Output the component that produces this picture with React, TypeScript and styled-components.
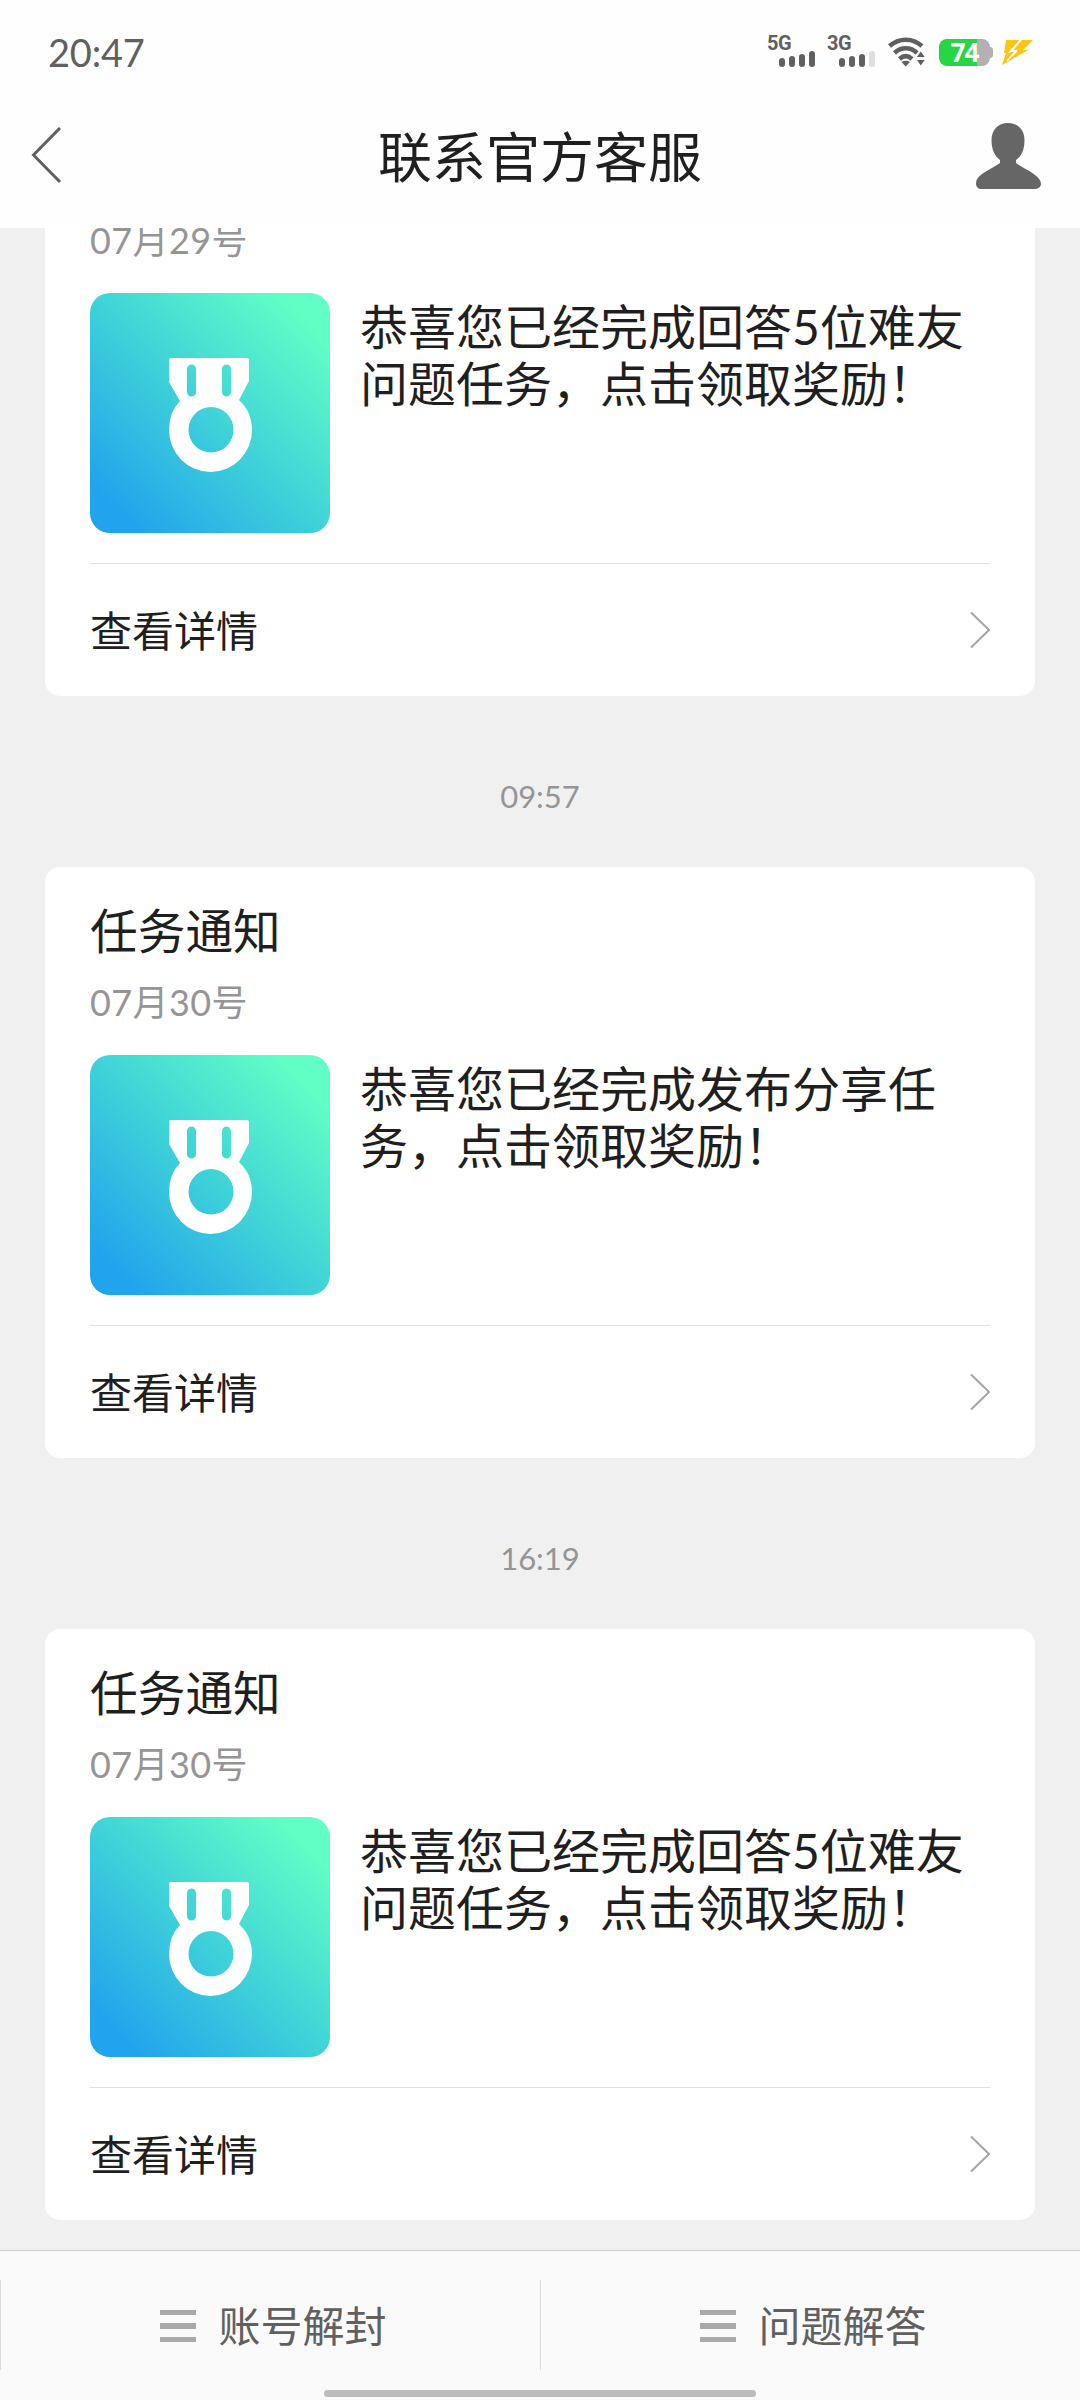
import React from "react";
import styled, { createGlobalStyle } from "styled-components";

const GlobalStyle = createGlobalStyle`
  * { box-sizing: border-box; }
  html, body { margin: 0; padding: 0; }
  body {
    width: 1080px;
    height: 2400px;
    overflow: hidden;
    background: #f0f0f0;
    font-family: Lato, "Noto Sans CJK SC", sans-serif;
    color: #1f1f1f;
  }
`;

const Screen = styled.div`
  position: relative;
  display: flex;
  flex-direction: column;
  width: 1080px;
  height: 2400px;
  overflow: hidden;
`;

const StatusBar = styled.header`
  display: flex;
  justify-content: space-between;
  align-items: center;
  flex: none;
  height: 106px;
  padding: 0 47px 0 48px;
  background: #fefefe;
`;

const Clock = styled.span`
  margin-top: -2px;
  font-size: 38px;
  line-height: 46px;
  letter-spacing: -0.2px;
  color: #606060;
`;

const StatusIcons = styled.div`
  display: flex;
  align-items: flex-start;
  height: 34px;
`;

const Signal = styled.div<{ $gap: number }>`
  display: flex;
  flex-direction: column;
  width: 48px;
  margin-right: ${(p) => p.$gap}px;
`;

const Network = styled.span`
  height: 14px;
  font: 700 20px/14px Roboto, sans-serif;
  letter-spacing: -0.5px;
  color: #606060;
`;

const Bars = styled.div`
  display: flex;
  align-items: flex-end;
  gap: 4px;
  height: 17px;
  margin: 0 0 0 12px;
`;

const Bar = styled.i<{ $h: number; $off?: boolean }>`
  width: 6px;
  height: ${(p) => p.$h}px;
  border-radius: 3px;
  background: ${(p) => (p.$off ? "#dedede" : "#606060")};
`;

const Battery = styled.div`
  display: flex;
  align-items: center;
  margin: 3px 9px 0 14px;
`;

const BatteryBody = styled.div`
  display: flex;
  align-items: center;
  justify-content: center;
  width: 51px;
  height: 27px;
  border-radius: 8px;
  background: linear-gradient(90deg, #27d644 38px, #b3afb3 38px);
  color: #fff;
  font: 700 26px/27px "Open Sans", sans-serif;
  letter-spacing: -1px;
`;

const BatteryTip = styled.i`
  width: 3px;
  height: 11px;
  border-radius: 0 3px 3px 0;
  background: #b3afb3;
`;

const TitleBar = styled.div`
  display: grid;
  grid-template-columns: 200px 1fr 200px;
  align-items: center;
  flex: none;
  height: 122px;
  padding: 0 36px 22px 30px;
  background: #fefefe;
`;

const Title = styled.h1`
  margin: 4px 0 0 6px;
  text-align: center;
  font-size: 54px;
  font-weight: 400;
  line-height: 80px;
`;

const UserButton = styled.div`
  display: flex;
  justify-content: flex-end;
`;

const Feed = styled.main`
  display: flex;
  flex-direction: column;
  justify-content: flex-end;
  flex: 1;
  min-height: 0;
  overflow: hidden;
  padding: 0 45px 30px;
`;

const Stamp = styled.time`
  flex: none;
  height: 171px;
  padding-top: 14px;
  line-height: 172px;
  text-align: center;
  font-size: 31px;
  color: #959595;
`;

const Card = styled.article<{ $continued: boolean }>`
  display: flex;
  flex-direction: column;
  flex: none;
  height: ${(p) => (p.$continued ? 498 : 591)}px;
  padding: ${(p) => (p.$continued ? 0 : 36)}px 45px 0;
  border-radius: ${(p) => (p.$continued ? "0 0 15px 15px" : "15px")};
  background: #fff;
`;

const CardTitle = styled.h2`
  margin: -1px 0 1px;
  font-size: 47.7px;
  font-weight: 400;
  line-height: 57px;
`;

const CardDate = styled.div`
  height: 95px;
  padding-top: 18px;
  font-size: 36px;
  line-height: 48px;
  letter-spacing: 0.4px;
  color: #959595;
`;

const CardBody = styled.div`
  display: flex;
  gap: 30px;
  height: 270px;
`;

const Message = styled.p`
  flex: 1;
  margin: 5px 0 0;
  font-size: 48px;
  line-height: 57px;
`;

const DetailRow = styled.div`
  display: flex;
  align-items: center;
  justify-content: space-between;
  height: 133px;
  border-top: 1px solid #e0e0e0;
  font-size: 42px;
`;

const DetailLabel = styled.span`
  margin-top: -3px;
`;

const Menu = styled.nav`
  display: grid;
  grid-template-columns: 1fr 1fr;
  align-items: start;
  flex: none;
  height: 150px;
  padding-top: 29px;
  border-top: 1px solid #cfcfcf;
  background: #fafafa;
`;

const MenuItem = styled.div`
  display: flex;
  align-items: center;
  justify-content: center;
  gap: 22px;
  height: 90px;
  padding: 2px 0 0 6px;
  border-left: 1px solid #dcdcdc;
  font-size: 42px;
  line-height: 60px;
  color: #606060;
`;

const MenuGlyph = styled.span`
  display: flex;
  flex-direction: column;
  gap: 8px;
  width: 36px;

  i {
    height: 5.6px;
    background: #a9a9a9;
  }
`;

const HomeIndicator = styled.div`
  position: absolute;
  left: 324px;
  bottom: 3px;
  width: 432px;
  height: 7px;
  border-radius: 4px;
  background: #bcbcbc;
`;

const WifiSvg = styled.svg`
  margin-left: 1px;
`;

const BoltSvg = styled.svg`
  margin-top: 3px;
`;

const Wifi = () => (
  <WifiSvg width="37" height="31" viewBox="0 0 37 31" fill="none" stroke="#606060" strokeWidth="4.500">
    <path d="M1.500 10C11 1.500 24.500 1.500 34 10" />
    <path d="M6.500 17C13 10.800 22.500 10.800 29 17" />
    <path d="M11.500 23C15.500 19.400 20 19.400 24 23" />
    <path d="M17.700 30.500l-4.200-4.500q4.200-2.500 8.400 0z" fill="#606060" stroke="none" />
    <path d="M32.800 15.500l3.900 5.500h-7.800zM32.800 29.500l3.900-5.500h-7.800z" fill="#606060" stroke="none" />
  </WifiSvg>
);

const Bolt = () => (
  <BoltSvg width="31" height="26" viewBox="0 0 31 26">
    <path d="M4 1H17L8 14H2Z" fill="#fdc513" />
    <path d="M20 1H31L21 11H26L0 26L4 14L10 13Z" fill="#fdc513" />
    <path d="M18.500 1L7.500 13L14 11.500L5 22M10 17L15 12" fill="none" stroke="#fff" strokeWidth="1.300" />
  </BoltSvg>
);

const BackIcon = () => (
  <svg width="32" height="58" viewBox="0 0 32 58" fill="none" stroke="#606060" strokeWidth="3">
    <path d="M30 1L3.500 28L30 55" />
  </svg>
);

const UserIcon = () => (
  <svg width="72" height="68" viewBox="0 0 72 68">
    <path
      d="M36 1C46 1 52.500 8 52.500 18C52.500 27 50 34 44 38V41C49 45 57 48 63 53C67 56 69 59 69 62C69 65 66 67 62 67H10C6 67 4 65 4 61C4 58 6 55 10 52C15 48 23 45 28 41V38C22.500 34 19.500 27 19.500 18C19.500 8 26 1 36 1Z"
      fill="#666"
    />
  </svg>
);

const MedalIcon = () => (
  <svg width="240" height="240" viewBox="0 0 240 240">
    <defs>
      <linearGradient id="tile" x1="0" y1="1" x2="1" y2="0">
        <stop offset="0.100" stopColor="#22a3ed" />
        <stop offset="0.500" stopColor="#3fd3d8" />
        <stop offset="0.900" stopColor="#62ffc5" />
      </linearGradient>
    </defs>
    <rect width="240" height="240" rx="20" fill="url(#tile)" />
    <path
      fillRule="evenodd"
      fill="#fff"
      d="M81 65H157Q159 65 159 67V88L149 107Q162 119 162 137A41.500 42 0 0 1 79 137Q79 119 90 108L79 89V67Q79 65 81 65ZM97 76V99A4.500 4.500 0 0 0 106 99V76A4.500 4.500 0 0 0 97 76ZM132 76V99A4.500 4.500 0 0 0 141 99V76A4.500 4.500 0 0 0 132 76ZM121 114A22.500 22.800 0 1 0 121 159.600A22.500 22.800 0 1 0 121 114Z"
    />
  </svg>
);

const ChevronIcon = () => (
  <svg width="20" height="38" viewBox="0 0 20 38" fill="none" stroke="#a6a6a6" strokeWidth="2">
    <path d="M1 1.500L19 19L1 36.500" />
  </svg>
);

type Notice = { title?: string; date: string; message: string; stamp?: string };

const notices: Notice[] = [
  { date: "07月29号", message: "恭喜您已经完成回答5位难友问题任务\uff0c点击领取奖励\uff01" },
  { stamp: "09:57", title: "任务通知", date: "07月30号", message: "恭喜您已经完成发布分享任务\uff0c点击领取奖励\uff01" },
  { stamp: "16:19", title: "任务通知", date: "07月30号", message: "恭喜您已经完成回答5位难友问题任务\uff0c点击领取奖励\uff01" },
];

const menu = ["账号解封", "问题解答"];

export default function App() {
  return (
    <Screen lang="zh-CN">
      <GlobalStyle />
      <StatusBar>
        <Clock>20:47</Clock>
        <StatusIcons>
          <Signal $gap={12}>
            <Network>5G</Network>
            <Bars>
              {[9, 11, 13, 16].map((h) => (
                <Bar key={h} $h={h} />
              ))}
            </Bars>
          </Signal>
          <Signal $gap={12}>
            <Network>3G</Network>
            <Bars>
              {[9, 11, 13, 16].map((h) => (
                <Bar key={h} $h={h} $off={h === 16} />
              ))}
            </Bars>
          </Signal>
          <Wifi />
          <Battery>
            <BatteryBody>74</BatteryBody>
            <BatteryTip />
          </Battery>
          <Bolt />
        </StatusIcons>
      </StatusBar>
      <TitleBar>
        <BackIcon />
        <Title>联系官方客服</Title>
        <UserButton>
          <UserIcon />
        </UserButton>
      </TitleBar>
      <Feed>
        {notices.map((n, i) => (
          <React.Fragment key={i}>
            {n.stamp && <Stamp>{n.stamp}</Stamp>}
            <Card $continued={!n.title}>
              {n.title && <CardTitle>{n.title}</CardTitle>}
              <CardDate>{n.date}</CardDate>
              <CardBody>
                <MedalIcon />
                <Message>{n.message}</Message>
              </CardBody>
              <DetailRow>
                <DetailLabel>查看详情</DetailLabel>
                <ChevronIcon />
              </DetailRow>
            </Card>
          </React.Fragment>
        ))}
      </Feed>
      <Menu>
        {menu.map((label) => (
          <MenuItem key={label}>
            <MenuGlyph>
              <i />
              <i />
              <i />
            </MenuGlyph>
            {label}
          </MenuItem>
        ))}
      </Menu>
      <HomeIndicator />
    </Screen>
  );
}
